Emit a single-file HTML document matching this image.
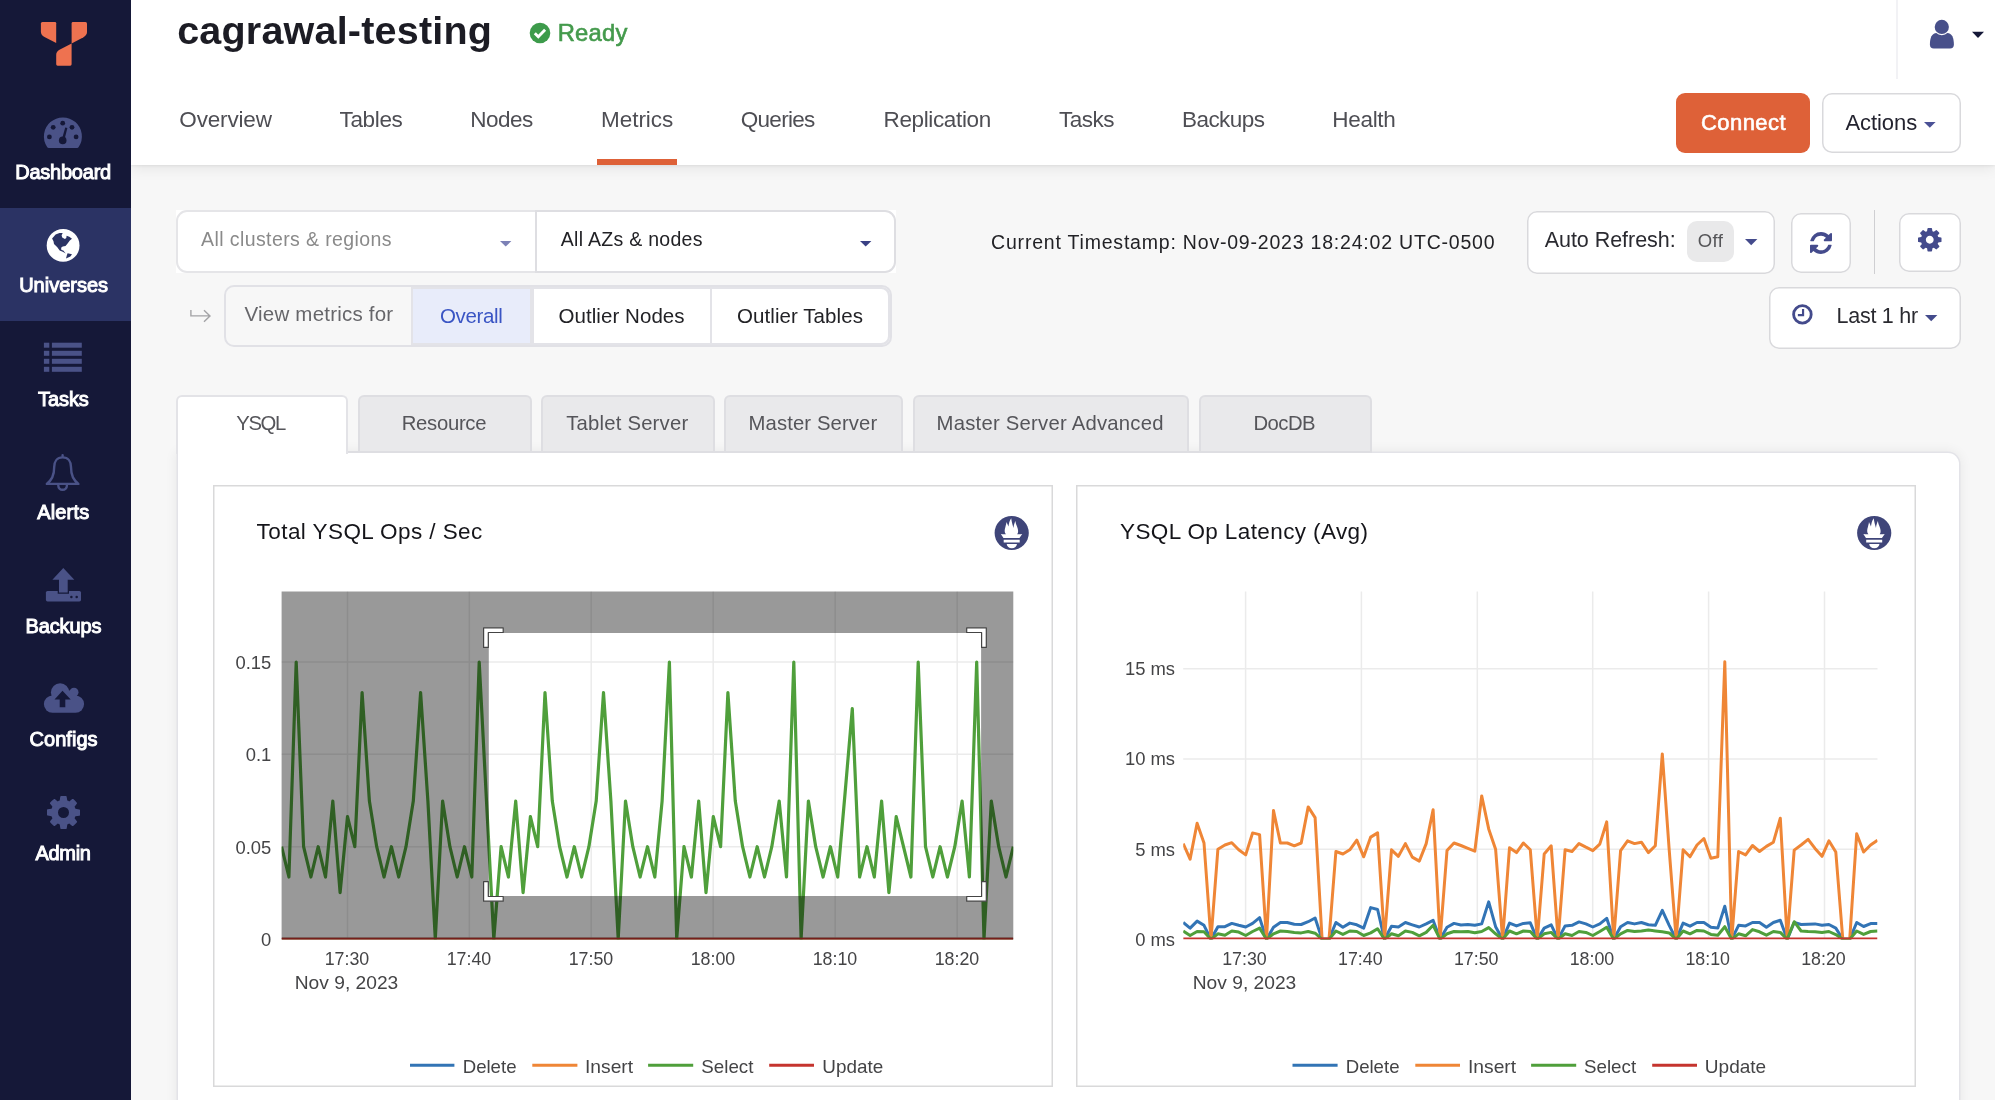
<!DOCTYPE html>
<html lang="en"><head><meta charset="utf-8"><title>cagrawal-testing - Metrics</title>
<style>
*{box-sizing:border-box;margin:0;padding:0}
html,body{width:1995px;height:1100px;overflow:hidden;background:#f7f7f7;font-family:"Liberation Sans",sans-serif}
.abs,.t,#sidebar,#header,#content div,#content svg{position:absolute}
.t{line-height:1;margin-top:-0.8465em;white-space:nowrap}
svg{display:block;overflow:visible}
#sidebar{left:0;top:0;width:131px;height:1100px;background:#151838}
#sidebar .active{position:absolute;left:0;top:208px;width:131px;height:113px;background:#2b3364}
#sidebar svg{position:absolute}
#header{left:131px;top:0;width:1864px;height:165px;background:#fff;box-shadow:0 1px 3px rgba(0,0,0,.07),0 3px 14px rgba(0,0,0,.08)}
#header div,#header svg{position:absolute}
#content{position:absolute;left:0;top:0;width:1995px;height:1100px;overflow:hidden}
.btn{background:#fff;box-shadow:inset 0 0 0 1.5px #d9d9dc;border-radius:10px}
.tab{background:#e9e9eb;border:2px solid #dedee2;border-bottom:none;border-radius:6px 6px 0 0}
.card{background:#fff;box-shadow:inset 0 0 0 1.5px #d9d9da}
#labels{position:absolute;left:0;top:0;width:1995px;height:1100px;will-change:transform}

</style></head><body>
<div id="content">
<div style="left:175.8px;top:210px;width:720.4px;height:62.7px;background:#fff"></div>
<div style="left:175.8px;top:210px;width:360px;height:62.7px;border:2px solid #e5e5e8;border-right-width:1px;border-radius:11px 0 0 11px"></div>
<div style="left:534.8px;top:210px;width:361.4px;height:62.7px;border:2px solid #dedee2;border-radius:0 11px 11px 0"></div>
<svg style="left:500px;top:240.5px" width="12" height="6"><path d="M0 0h11.4l-5.7 5.6z" fill="#7c81b6"/></svg>
<svg style="left:860px;top:240.5px" width="12" height="6"><path d="M0 0h11.4l-5.7 5.6z" fill="#3a4185"/></svg>
<div class="btn" style="left:1526.5px;top:210.5px;width:248px;height:63px"></div>
<div style="left:1687px;top:221px;width:47px;height:41px;background:#e9e9ea;border-radius:10px"></div>
<svg style="left:1744.8px;top:239px" width="13" height="7"><path d="M0 0h12.4l-6.2 6.2z" fill="#444b8c"/></svg>
<div class="btn" style="left:1790.5px;top:212.5px;width:60px;height:60.5px"></div>
<div style="left:1873.5px;top:210px;width:1.5px;height:64px;background:#cfcfd2"></div>
<div class="btn" style="left:1898.5px;top:212.5px;width:62px;height:59.5px"></div>
<div class="btn" style="left:1768.5px;top:286.5px;width:192px;height:62.5px"></div>
<svg style="left:1924.8px;top:314.8px" width="13" height="7"><path d="M0 0h12.4l-6.2 6.2z" fill="#444b8c"/></svg>
<svg style="left:1809.5px;top:231.5px" width="22" height="22" viewBox="0 0 1536 1536"><path fill="#444b8c" d="M1511 928q0 5-1 7-64 268-268 434.500T764 1536q-146 0-282.500-55T238 1324l-129 129q-19 19-45 19t-45-19-19-45V960q0-26 19-45t45-19h448q26 0 45 19t19 45-19 45l-137 137q71 66 161 102t187 36q134 0 250-65t186-179q11-17 53-117 8-23 30-23h192q13 0 22.500 9.500t9.500 22.500zm25-800v448q0 26-19 45t-45 19h-448q-26 0-45-19t-19-45 19-45l138-138Q969 256 768 256q-134 0-250 65T332 500q-11 17-53 117-8 23-30 23H50q-13 0-22.500-9.500T18 608v-7q65-268 270-434.500T768 0q146 0 284 55.500T1297 212l130-129q19-19 45-19t45 19 19 45z"/></svg>
<svg style="left:1917.5px;top:228px" width="23.5" height="23.5" viewBox="0 0 1536 1536"><path fill="#444b8c" d="M1024 768q0-106-75-181t-181-75-181 75-75 181 75 181 181 75 181-75 75-181zm512-109v222q0 12-8 23t-20 13l-185 28q-19 54-39 91 35 50 107 138 10 12 10 25t-9 23q-27 37-99 108t-94 71q-12 0-26-9l-138-108q-44 23-91 38-16 136-29 186-7 28-36 28H657q-14 0-24.500-8.500T621 1506l-28-184q-49-16-90-37l-141 107q-10 9-25 9-14 0-25-11-126-114-165-168-7-10-7-23 0-12 8-23 15-21 51-66.500t54-70.500q-27-50-41-99L29 913q-13-2-21-12.500T0 877V655q0-12 8-23t19-13l186-28q14-46 39-92-40-57-107-138-10-12-10-24 0-10 9-23 26-36 98.500-107.500T337 135q13 0 26 10l138 107q44-23 91-38 16-136 29-186 7-28 36-28h222q14 0 24.500 8.500T915 30l28 184q49 16 90 37l142-107q9-9 24-9 13 0 25 10 129 119 165 170 7 8 7 22 0 12-8 23-15 21-51 66.500t-54 70.500q26 50 41 98l183 28q13 2 21 12.500t8 23.500z"/></svg>
<svg style="left:1792.3px;top:304.2px" width="20.8" height="20.8" viewBox="0 0 22 22"><circle cx="11" cy="11" r="9.3" fill="none" stroke="#444b8c" stroke-width="3"/><path d="M11.7 5.2v6.6H6.2" fill="none" stroke="#444b8c" stroke-width="2.3"/></svg>
<svg style="left:0;top:0" width="230" height="330" viewBox="0 0 230 330"><path d="M190.9 310V315.900H209.700M204 310.200L210 315.900L204 321.800" fill="none" stroke="#a3a3a6" stroke-width="1.400"/></svg>
<div style="left:224px;top:285px;width:667.5px;height:62px;border:2px solid #e1e1e6;border-radius:10px;background:#f7f7f7"></div>
<div style="left:411px;top:287px;width:478.500px;height:58px;background:#e3e3e8;border-radius:0 8px 8px 0"></div>
<div style="left:412.600px;top:288.900px;width:117.500px;height:53.900px;background:#e8ecfa"></div>
<div style="left:533.700px;top:288.900px;width:176.200px;height:53.900px;background:#fff"></div>
<div style="left:711.800px;top:288.900px;width:176.200px;height:53.900px;background:#fff;border-radius:0 7px 7px 0"></div>
<div style="left:178px;top:453px;width:1781px;height:700px;background:#fff;border-radius:0 11px 0 0;box-shadow:0 0 0 1.5px #e3e3e8,0 0 13px 1px rgba(0,0,0,.075)"></div>
<div class="tab" style="left:358.0px;top:395px;width:174.0px;height:56px"></div>
<div class="tab" style="left:541.0px;top:395px;width:174.0px;height:56px"></div>
<div class="tab" style="left:724.0px;top:395px;width:179.0px;height:56px"></div>
<div class="tab" style="left:912.5px;top:395px;width:276.0px;height:56px"></div>
<div class="tab" style="left:1198.5px;top:395px;width:173.0px;height:56px"></div>
<div style="left:340px;top:451px;width:1032px;height:2px;background:#dedee2"></div>
<div class="tab" style="left:176px;top:395px;width:172px;height:58.5px;background:#fff;border-color:#e3e3e7"></div>
<div class="card" style="left:213px;top:484.6px;width:839.6px;height:602.9px"></div>
<div class="card" style="left:1076px;top:484.6px;width:839.6px;height:602.9px"></div>
<svg style="left:0;top:0;will-change:transform" width="1995" height="1100" viewBox="0 0 1995 1100" font-family="Liberation Sans, sans-serif" font-size="18.4" fill="#444446">
<defs><clipPath id="cp1"><rect x="281.6" y="591.5" width="731.7" height="348"/></clipPath><clipPath id="cp2"><rect x="1183.2" y="591.5" width="694.3" height="348"/></clipPath></defs>
<path d="M347.5 591.5V939.0" stroke="#ebebeb" stroke-width="1.500"/>
<path d="M469.3 591.5V939.0" stroke="#ebebeb" stroke-width="1.500"/>
<path d="M591.2 591.5V939.0" stroke="#ebebeb" stroke-width="1.500"/>
<path d="M713.2 591.5V939.0" stroke="#ebebeb" stroke-width="1.500"/>
<path d="M835.2 591.5V939.0" stroke="#ebebeb" stroke-width="1.500"/>
<path d="M957.2 591.5V939.0" stroke="#ebebeb" stroke-width="1.500"/>
<path d="M281.6 662.0H1013.3" stroke="#ebebeb" stroke-width="1.500"/>
<path d="M281.6 754.3H1013.3" stroke="#ebebeb" stroke-width="1.500"/>
<path d="M281.6 846.7H1013.3" stroke="#ebebeb" stroke-width="1.500"/>
<g clip-path="url(#cp1)">
<path d="M281.6 939.0L1013.3 939.0" fill="none" stroke="#3274b5" stroke-width="2.6" stroke-linejoin="round"/>
<path d="M281.6 939.0L1013.3 939.0" fill="none" stroke="#ef8636" stroke-width="2.6" stroke-linejoin="round"/>
<path d="M281.6 846.7L288.9 877.0L296.2 662.0L303.6 846.7L310.9 877.0L318.2 846.7L325.5 877.0L332.8 801.1L340.1 892.6L347.5 816.6L354.8 846.7L362.1 692.6L369.4 801.1L376.7 846.7L384.0 877.0L391.4 846.7L398.7 877.0L406.0 846.7L413.3 801.1L420.6 692.6L427.9 801.1L435.3 939.0L442.6 801.1L449.9 846.7L457.2 877.0L464.5 846.7L471.8 877.0L479.2 662.0L486.5 801.1L493.8 939.0L501.1 846.7L508.4 877.0L515.7 801.1L523.1 892.6L530.4 816.6L537.7 846.7L545.0 692.6L552.3 801.1L559.6 846.7L567.0 877.0L574.3 846.7L581.6 877.0L588.9 846.7L596.2 801.1L603.5 692.6L610.9 801.1L618.2 939.0L625.5 801.1L632.8 846.7L640.1 877.0L647.5 846.7L654.8 877.0L662.1 801.1L669.4 662.0L676.7 939.0L684.0 846.7L691.4 877.0L698.7 801.1L706.0 892.6L713.3 816.6L720.6 846.7L727.9 692.6L735.3 801.1L742.6 846.7L749.9 877.0L757.2 846.7L764.5 877.0L771.8 846.7L779.2 801.1L786.5 877.0L793.8 662.0L801.1 939.0L808.4 801.1L815.7 846.7L823.1 877.0L830.4 846.7L837.7 877.0L845.0 794.0L852.3 708.7L859.6 877.0L867.0 846.7L874.3 877.0L881.6 801.1L888.9 892.6L896.2 816.6L903.5 846.7L910.9 877.0L918.2 662.0L925.5 846.7L932.8 877.0L940.1 846.7L947.4 877.0L954.8 846.7L962.1 801.1L969.4 877.0L976.7 662.0L984.0 939.0L991.3 801.1L998.7 846.7L1006.0 877.0L1013.3 846.7" fill="none" stroke="#4f9f3b" stroke-width="3.2" stroke-linejoin="round"/>
<path d="M281.6 938.6L1013.3 938.6" fill="none" stroke="#c5342e" stroke-width="1.8" stroke-linejoin="round"/>
</g>
<path fill-rule="evenodd" fill="rgba(0,0,0,0.4)" d="M281.6 591.5H1013.3V939.5H281.6zM488.8 633.0H981.1V896.0H488.8z"/>
<path d="M483.6 627.8H503.2V632.5H488.3V647.4H483.6z" fill="#fff" stroke="#444" stroke-width="1.200" stroke-linejoin="round"/>
<path d="M986.3 627.8H966.7V632.5H981.6V647.4H986.3z" fill="#fff" stroke="#444" stroke-width="1.200" stroke-linejoin="round"/>
<path d="M483.6 901.2H503.2V896.5H488.3V881.6H483.6z" fill="#fff" stroke="#444" stroke-width="1.200" stroke-linejoin="round"/>
<path d="M986.3 901.2H966.7V896.5H981.6V881.6H986.3z" fill="#fff" stroke="#444" stroke-width="1.200" stroke-linejoin="round"/>
<text x="271.300" y="668.9" text-anchor="end">0.15</text>
<text x="271.300" y="761.2" text-anchor="end">0.1</text>
<text x="271.300" y="853.6" text-anchor="end">0.05</text>
<text x="271.300" y="946.4" text-anchor="end">0</text>
<text x="347.0" y="965.300" text-anchor="middle" textLength="44.600" lengthAdjust="spacingAndGlyphs">17:30</text>
<text x="469.0" y="965.300" text-anchor="middle" textLength="44.600" lengthAdjust="spacingAndGlyphs">17:40</text>
<text x="591.0" y="965.300" text-anchor="middle" textLength="44.600" lengthAdjust="spacingAndGlyphs">17:50</text>
<text x="713.0" y="965.300" text-anchor="middle" textLength="44.600" lengthAdjust="spacingAndGlyphs">18:00</text>
<text x="835.0" y="965.300" text-anchor="middle" textLength="44.600" lengthAdjust="spacingAndGlyphs">18:10</text>
<text x="957.0" y="965.300" text-anchor="middle" textLength="44.600" lengthAdjust="spacingAndGlyphs">18:20</text>
<text x="346.500" y="988.500" text-anchor="middle" textLength="103.500" lengthAdjust="spacingAndGlyphs">Nov 9, 2023</text>
<path d="M410.0 1065.2H454.4" stroke="#3274b5" stroke-width="3"/><text x="462.7" y="1072.6" textLength="53.8" lengthAdjust="spacingAndGlyphs">Delete</text><path d="M532.3 1065.2H577.4" stroke="#ef8636" stroke-width="3"/><text x="585.0" y="1072.6" textLength="48.1" lengthAdjust="spacingAndGlyphs">Insert</text><path d="M648.1 1065.2H693.2" stroke="#4f9f3b" stroke-width="3"/><text x="701.3" y="1072.6" textLength="52.1" lengthAdjust="spacingAndGlyphs">Select</text><path d="M769.2 1065.2H814.0" stroke="#c5342e" stroke-width="3"/><text x="822.3" y="1072.6" textLength="60.9" lengthAdjust="spacingAndGlyphs">Update</text>
<path d="M1245.6 591.5V939.0" stroke="#ebebeb" stroke-width="1.500"/>
<path d="M1361.4 591.5V939.0" stroke="#ebebeb" stroke-width="1.500"/>
<path d="M1477.3 591.5V939.0" stroke="#ebebeb" stroke-width="1.500"/>
<path d="M1592.7 591.5V939.0" stroke="#ebebeb" stroke-width="1.500"/>
<path d="M1708.6 591.5V939.0" stroke="#ebebeb" stroke-width="1.500"/>
<path d="M1824.5 591.5V939.0" stroke="#ebebeb" stroke-width="1.500"/>
<path d="M1183.2 668.7H1877.5" stroke="#ebebeb" stroke-width="1.500"/>
<path d="M1183.2 759.0H1877.5" stroke="#ebebeb" stroke-width="1.500"/>
<path d="M1183.2 849.3H1877.5" stroke="#ebebeb" stroke-width="1.500"/>
<g clip-path="url(#cp2)">
<path d="M1183.2 922.5L1190.1 928.1L1197.1 921.1L1204.0 925.3L1211.0 939.3L1217.9 926.7L1224.9 926.7L1231.8 923.4L1238.7 925.3L1245.7 927.0L1252.6 923.4L1259.6 917.7L1266.5 939.3L1273.5 927.3L1280.4 922.5L1287.3 922.5L1294.3 924.2L1301.2 924.5L1308.2 921.7L1315.1 918.0L1322.1 939.3L1329.0 939.3L1335.9 922.5L1342.9 927.3L1349.8 923.1L1356.8 924.8L1363.7 928.1L1370.7 907.6L1377.6 909.5L1384.5 939.3L1391.5 926.2L1398.4 927.0L1405.4 922.5L1412.3 924.8L1419.3 927.0L1426.2 923.9L1433.1 920.3L1440.1 939.3L1447.0 927.3L1454.0 923.4L1460.9 925.0L1467.9 924.5L1474.8 925.3L1481.7 923.9L1488.7 901.9L1495.6 926.7L1502.6 939.3L1509.5 923.1L1516.5 925.9L1523.4 923.4L1530.3 922.8L1537.3 939.3L1544.2 928.1L1551.2 924.8L1558.1 939.3L1565.1 925.9L1572.0 925.3L1579.0 921.9L1585.9 923.9L1592.8 927.0L1599.8 923.9L1606.7 918.3L1613.7 939.3L1620.6 926.7L1627.6 922.5L1634.5 923.9L1641.4 922.5L1648.4 924.8L1655.3 925.3L1662.3 910.4L1669.2 925.3L1676.2 939.3L1683.1 923.1L1690.0 926.2L1697.0 922.5L1703.9 922.5L1710.9 927.3L1717.8 928.1L1724.8 906.2L1731.7 939.3L1738.6 925.3L1745.6 925.9L1752.5 922.5L1759.5 922.5L1766.4 927.3L1773.4 922.5L1780.3 920.3L1787.2 939.3L1794.2 922.5L1801.1 924.5L1808.1 924.2L1815.0 923.9L1822.0 925.3L1828.9 924.5L1835.8 928.1L1842.8 939.3L1849.7 939.3L1856.7 922.5L1863.6 926.5L1870.6 923.6L1877.5 923.6" fill="none" stroke="#3274b5" stroke-width="3" stroke-linejoin="round"/>
<path d="M1183.2 843.6L1190.1 859.1L1197.1 823.3L1204.0 843.0L1211.0 939.3L1217.9 849.2L1224.9 845.0L1231.8 842.7L1238.7 849.8L1245.7 854.9L1252.6 832.9L1259.6 834.6L1266.5 939.3L1273.5 810.6L1280.4 843.0L1287.3 843.0L1294.3 845.8L1301.2 843.0L1308.2 806.9L1315.1 817.6L1322.1 939.3L1329.0 939.3L1335.9 851.5L1342.9 854.0L1349.8 849.8L1356.8 840.2L1363.7 856.8L1370.7 837.1L1377.6 832.9L1384.5 939.3L1391.5 849.8L1398.4 856.3L1405.4 843.6L1412.3 857.1L1419.3 861.1L1426.2 843.6L1433.1 809.7L1440.1 939.3L1447.0 850.6L1454.0 843.0L1460.9 845.5L1467.9 848.4L1474.8 851.2L1481.7 795.9L1488.7 828.9L1495.6 849.2L1502.6 939.3L1509.5 847.8L1516.5 852.6L1523.4 843.0L1530.3 849.8L1537.3 939.3L1544.2 854.0L1551.2 845.8L1558.1 939.3L1565.1 849.8L1572.0 851.5L1579.0 843.6L1585.9 847.2L1592.8 850.6L1599.8 844.1L1606.7 821.9L1613.7 939.3L1620.6 850.6L1627.6 840.8L1634.5 843.6L1641.4 842.2L1648.4 852.6L1655.3 845.8L1662.3 753.9L1669.2 849.8L1676.2 939.3L1683.1 849.8L1690.0 856.8L1697.0 845.0L1703.9 838.5L1710.9 858.2L1717.8 856.8L1724.8 661.7L1731.7 939.3L1738.6 851.5L1745.6 854.9L1752.5 845.5L1759.5 851.5L1766.4 846.4L1773.4 842.2L1780.3 818.2L1787.2 939.3L1794.2 850.1L1801.1 845.0L1808.1 839.3L1815.0 848.4L1822.0 856.3L1828.9 840.8L1835.8 852.0L1842.8 939.3L1849.7 939.3L1856.7 833.7L1863.6 852.0L1870.6 845.0L1877.5 840.2" fill="none" stroke="#ef8636" stroke-width="3" stroke-linejoin="round"/>
<path d="M1183.2 931.0L1190.1 935.5L1197.1 931.5L1204.0 931.8L1211.0 939.3L1217.9 933.8L1224.9 935.2L1231.8 931.0L1238.7 932.1L1245.7 935.5L1252.6 931.5L1259.6 928.1L1266.5 939.3L1273.5 933.8L1280.4 931.0L1287.3 931.5L1294.3 932.4L1301.2 932.9L1308.2 931.5L1315.1 933.2L1322.1 939.3L1329.0 939.3L1335.9 931.0L1342.9 934.4L1349.8 931.0L1356.8 931.5L1363.7 935.5L1370.7 932.9L1377.6 928.7L1384.5 939.3L1391.5 933.8L1398.4 935.8L1405.4 931.0L1412.3 932.4L1419.3 935.8L1426.2 932.4L1433.1 925.3L1440.1 939.3L1447.0 933.8L1454.0 931.5L1460.9 931.8L1467.9 931.5L1474.8 932.7L1481.7 931.5L1488.7 927.6L1495.6 933.8L1502.6 939.3L1509.5 931.0L1516.5 933.8L1523.4 931.0L1530.3 931.5L1537.3 939.3L1544.2 933.8L1551.2 932.4L1558.1 939.3L1565.1 933.8L1572.0 935.5L1579.0 931.5L1585.9 932.4L1592.8 935.5L1599.8 931.5L1606.7 927.3L1613.7 939.3L1620.6 933.8L1627.6 930.4L1634.5 931.5L1641.4 931.0L1648.4 930.1L1655.3 931.0L1662.3 931.8L1669.2 932.9L1676.2 939.3L1683.1 931.0L1690.0 933.8L1697.0 930.4L1703.9 931.0L1710.9 934.4L1717.8 935.2L1724.8 926.7L1731.7 939.3L1738.6 933.8L1745.6 935.8L1752.5 929.6L1759.5 931.8L1766.4 935.2L1773.4 931.5L1780.3 932.4L1787.2 939.3L1794.2 921.7L1801.1 931.0L1808.1 931.5L1815.0 931.8L1822.0 932.4L1828.9 931.5L1835.8 934.6L1842.8 939.3L1849.7 939.3L1856.7 931.0L1863.6 934.4L1870.6 931.5L1877.5 931.0" fill="none" stroke="#4f9f3b" stroke-width="3" stroke-linejoin="round"/>
<path d="M1183.2 938.5L1877.5 938.5" fill="none" stroke="#c5342e" stroke-width="2.1" stroke-linejoin="round"/>
</g>
<text x="1175" y="674.9" text-anchor="end">15 ms</text>
<text x="1175" y="765.2" text-anchor="end">10 ms</text>
<text x="1175" y="855.5" text-anchor="end">5 ms</text>
<text x="1175" y="945.7" text-anchor="end">0 ms</text>
<text x="1244.5" y="965.300" text-anchor="middle" textLength="44.600" lengthAdjust="spacingAndGlyphs">17:30</text>
<text x="1360.3" y="965.300" text-anchor="middle" textLength="44.600" lengthAdjust="spacingAndGlyphs">17:40</text>
<text x="1476.2" y="965.300" text-anchor="middle" textLength="44.600" lengthAdjust="spacingAndGlyphs">17:50</text>
<text x="1592.0" y="965.300" text-anchor="middle" textLength="44.600" lengthAdjust="spacingAndGlyphs">18:00</text>
<text x="1707.7" y="965.300" text-anchor="middle" textLength="44.600" lengthAdjust="spacingAndGlyphs">18:10</text>
<text x="1823.5" y="965.300" text-anchor="middle" textLength="44.600" lengthAdjust="spacingAndGlyphs">18:20</text>
<text x="1244.500" y="988.500" text-anchor="middle" textLength="103.500" lengthAdjust="spacingAndGlyphs">Nov 9, 2023</text>
<path d="M1292.5 1065.2H1337.6" stroke="#3274b5" stroke-width="3"/><text x="1345.7" y="1072.6" textLength="53.8" lengthAdjust="spacingAndGlyphs">Delete</text><path d="M1415.3 1065.2H1460.0" stroke="#ef8636" stroke-width="3"/><text x="1468.0" y="1072.6" textLength="48.1" lengthAdjust="spacingAndGlyphs">Insert</text><path d="M1531.1 1065.2H1576.2" stroke="#4f9f3b" stroke-width="3"/><text x="1584.0" y="1072.6" textLength="52.1" lengthAdjust="spacingAndGlyphs">Select</text><path d="M1652.2 1065.2H1697.0" stroke="#c5342e" stroke-width="3"/><text x="1704.8" y="1072.6" textLength="61.4" lengthAdjust="spacingAndGlyphs">Update</text>
<g transform="translate(1011.7 533)"><circle r="17.100" fill="#3f4579"/><path fill="#fff" d="M-.5-14.750C0-11 1-8 1.750-5 2-8 3-10.500 3.750-12 4-9 5-7.500 5.500-6 6.500-3.500 7-.5 5.500 1.200 7 1.500 9 1.200 10.500 1L7.750 5H-8.250L-10.850 1C-9 1.200-7.500 1.500-5.800 1.200-7.500-.5-7.200-3.500-6.300-6-5.800-8-5.300-9.500-5.250-11-4.500-9.500-3.800-8-3.250-6.500-2.800-9-2.300-12.500-.5-14.750zM-8 6.750H8V9.500H-8zM-5 11H5.250A5.100 4.200 0 0 1-5 11z"/></g>
<g transform="translate(1874.2 533)"><circle r="17.100" fill="#3f4579"/><path fill="#fff" d="M-.5-14.750C0-11 1-8 1.750-5 2-8 3-10.500 3.750-12 4-9 5-7.500 5.500-6 6.500-3.500 7-.5 5.500 1.200 7 1.500 9 1.200 10.500 1L7.750 5H-8.250L-10.850 1C-9 1.200-7.500 1.500-5.800 1.200-7.500-.5-7.200-3.500-6.300-6-5.800-8-5.300-9.500-5.250-11-4.500-9.500-3.800-8-3.250-6.500-2.800-9-2.300-12.500-.5-14.750zM-8 6.750H8V9.500H-8zM-5 11H5.250A5.100 4.200 0 0 1-5 11z"/></g>
</svg>
</div>
<div id="header">
<div style="left:466px;top:159px;width:79.6px;height:6px;background:#de6138"></div>
<div style="left:1545px;top:93px;width:134px;height:59.7px;background:#de6138;border-radius:9px"></div>
<div class="btn" style="left:1690.5px;top:93.3px;width:139.3px;height:59.3px;border-radius:10px"></div>
<svg style="left:1793.2px;top:122px" width="12" height="6"><path d="M0 0h11.6l-5.8 5.8z" fill="#4a5196"/></svg>
<div style="left:1765.2px;top:0;width:1.6px;height:79px;background:#f2f2f5"></div>
<svg style="left:1769px;top:0" width="95" height="80" viewBox="1900 0 95 80"><path fill="#48508a" d="M1936.500 32.900H1947.300C1952 32.900 1953.900 38 1953.900 44.500Q1953.900 48.600 1950 48.600H1933.800Q1929.900 48.600 1929.900 44.500C1929.900 38 1931.800 32.900 1936.500 32.900z"/><circle cx="1941.800" cy="26.900" r="8.300" fill="#fff"/><circle cx="1941.800" cy="26.900" r="7.100" fill="#48508a"/><path d="M1972 31.800h12l-6 6.200z" fill="#151838"/></svg>
<svg style="left:398px;top:22px" width="22" height="22" viewBox="0 0 22 22"><circle cx="11" cy="11" r="10.3" fill="#3d9b4b"/><path d="M5.8 11.300l3.500 3.500 6.800-7" fill="none" stroke="#fff" stroke-width="2.900"/></svg>
</div>
<div id="sidebar"><div class="active"></div>
<svg style="left:0;top:0" width="131" height="900" viewBox="0 0 131 900">
<g fill="#ee7250"><path d="M42.400 22H55Q56.200 22 56.200 23.200V43L44.500 37.100Q40.900 35.200 40.900 31.500V23.500Q40.900 22 42.400 22z"/><path d="M73 22H85.500Q87 22 87 23.500V31.800Q87 35.300 83.500 37.200L71.600 43.400V23.400Q71.600 22 73 22z"/><path d="M71.600 43.400V64.300Q71.600 65.700 70.200 65.700H57.600Q56.200 65.700 56.200 64.300V55Q56.200 51.500 59.500 49.800z"/></g>
<path d="M48.800 148Q47.600 148 47 146.800A19 19 0 1 1 78.800 146.800Q78.200 148 77 148z" fill="#4a5287"/>
<g fill="#151838"><circle cx="49.400" cy="136.900" r="2.400"/><circle cx="53.200" cy="127.300" r="2.400"/><circle cx="62.700" cy="123.200" r="2.400"/><circle cx="72" cy="127.300" r="2.400"/><circle cx="76.100" cy="136.900" r="2.400"/><circle cx="62.700" cy="140.400" r="3.800"/><path d="M65.200 127.500l2.200.6-3 12-2.500-.6z"/></g>
<circle cx="63.100" cy="245.400" r="16.400" fill="#fff"/>
<path fill="#2b3364" d="M52.100 238.500L55.600 234.600 59.500 233 62.700 233 61.600 235.200 62.200 237.400 64.900 239 66.300 237.900 66.600 235.700 69.300 236.800 72 238.700 69.800 240.600 67.600 243.400 65.500 246.100 62.700 246.600 61.100 247.700 61.400 249.900 63.300 250.500 64.900 252.600 65.800 253.600 62.700 251.800 59.700 250.500 57.300 247.200 54 243.900 53.500 241.200zM67.600 253.200L72 254.300 70.400 256.500 66 258.400 66.800 255.400z"/>
<g fill="#4a5287"><rect x="43.900" y="342.7" width="5.400" height="5"/><rect x="51.900" y="342.7" width="29.900" height="5"/><rect x="43.900" y="350.8" width="5.400" height="5"/><rect x="51.900" y="350.8" width="29.900" height="5"/><rect x="43.900" y="358.8" width="5.400" height="5"/><rect x="51.900" y="358.8" width="29.900" height="5"/><rect x="43.900" y="366.8" width="5.400" height="5"/><rect x="51.900" y="366.8" width="29.900" height="5"/></g>
<g fill="none" stroke="#4a5287" stroke-width="2.400" stroke-linejoin="round" stroke-linecap="round"><path d="M62.600 455.300v1.500M62.600 457.400C57 457.400 54.200 461.500 54.200 467 54.200 476 51.500 480 46.800 483.900H78.400C73.700 480 71 476 71 467 71 461.500 68.200 457.400 62.600 457.400z"/><path d="M58.300 485.500a4.300 4.300 0 0 0 8.600 0"/></g>
<g fill="#4a5287"><rect x="45.900" y="590.900" width="35.100" height="10.500" rx="1.600"/><path d="M63.300 567.900L74.300 579.800H67.700V592.400H59V579.800H52.400z" stroke="#151838" stroke-width="2.600" paint-order="stroke"/></g>
<circle cx="71.400" cy="597" r="1.250" fill="#151838"/><circle cx="76.700" cy="597" r="1.250" fill="#151838"/>
<g fill="#4a5287"><circle cx="60.100" cy="692.500" r="9.200"/><circle cx="74" cy="692.300" r="4.500"/><rect x="43.900" y="695.500" width="40.200" height="17.200" rx="8.600"/><rect x="62" y="690.500" width="13" height="8"/></g>
<path fill="#151838" d="M62.500 690.800L70.700 699.600H65.300V707.200H59.700V699.600H54.500z"/>
</svg>
<svg style="left:46.500px;top:796.300px" width="33" height="33" viewBox="0 0 1536 1536"><path fill="#4a5287" d="M1024 768q0-106-75-181t-181-75-181 75-75 181 75 181 181 75 181-75 75-181zm512-109v222q0 12-8 23t-20 13l-185 28q-19 54-39 91 35 50 107 138 10 12 10 25t-9 23q-27 37-99 108t-94 71q-12 0-26-9l-138-108q-44 23-91 38-16 136-29 186-7 28-36 28H657q-14 0-24.500-8.500T621 1506l-28-184q-49-16-90-37l-141 107q-10 9-25 9-14 0-25-11-126-114-165-168-7-10-7-23 0-12 8-23 15-21 51-66.500t54-70.500q-27-50-41-99L29 913q-13-2-21-12.500T0 877V655q0-12 8-23t19-13l186-28q14-46 39-92-40-57-107-138-10-12-10-24 0-10 9-23 26-36 98.500-107.500T337 135q13 0 26 10l138 107q44-23 91-38 16-136 29-186 7-28 36-28h222q14 0 24.500 8.500T915 30l28 184q49 16 90 37l142-107q9-9 24-9 13 0 25 10 129 119 165 170 7 8 7 22 0 12-8 23-15 21-51 66.500t-54 70.500q26 50 41 98l183 28q13 2 21 12.500t8 23.500z"/></svg>
</div>
<div id="labels">
<span class="t" id="t0" style="left:177.2px;top:44.9px;font-size:39.5px;color:#1c1c24;font-weight:700;letter-spacing:0.200px">cagrawal-testing</span>
<span class="t" id="t1" style="left:557.7px;top:40.7px;font-size:23.8px;color:#449a4c;font-weight:400;-webkit-text-stroke:0.60px #449a4c;letter-spacing:0.226px">Ready</span>
<span class="t" id="t2" style="left:179.3px;top:127.7px;font-size:22.5px;color:#4e4e54;font-weight:400;letter-spacing:-0.169px">Overview</span>
<span class="t" id="t3" style="left:339.6px;top:127.7px;font-size:22.5px;color:#4e4e54;font-weight:400;letter-spacing:-0.369px">Tables</span>
<span class="t" id="t4" style="left:470.2px;top:127.7px;font-size:22.5px;color:#4e4e54;font-weight:400;letter-spacing:-0.487px">Nodes</span>
<span class="t" id="t5" style="left:601.0px;top:127.7px;font-size:22.5px;color:#4e4e54;font-weight:400;letter-spacing:-0.033px">Metrics</span>
<span class="t" id="t6" style="left:740.7px;top:127.7px;font-size:22.5px;color:#4e4e54;font-weight:400;letter-spacing:-0.683px">Queries</span>
<span class="t" id="t7" style="left:883.5px;top:127.7px;font-size:22.5px;color:#4e4e54;font-weight:400;letter-spacing:-0.363px">Replication</span>
<span class="t" id="t8" style="left:1058.9px;top:127.7px;font-size:22.5px;color:#4e4e54;font-weight:400;letter-spacing:-0.504px">Tasks</span>
<span class="t" id="t9" style="left:1182.1px;top:127.7px;font-size:22.5px;color:#4e4e54;font-weight:400;letter-spacing:-0.585px">Backups</span>
<span class="t" id="t10" style="left:1332.3px;top:127.7px;font-size:22.5px;color:#4e4e54;font-weight:400;letter-spacing:-0.309px">Health</span>
<span class="t" id="t11" style="left:1701.0px;top:130.9px;font-size:22px;color:#ffffff;font-weight:400;-webkit-text-stroke:0.60px #ffffff;letter-spacing:0.441px">Connect</span>
<span class="t" id="t12" style="left:1845.5px;top:130.9px;font-size:22px;color:#23232f;font-weight:400;letter-spacing:-0.076px">Actions</span>
<span class="t" id="t13" style="left:15.2px;top:179.2px;font-size:20px;color:#ffffff;font-weight:400;-webkit-text-stroke:0.98px #ffffff;letter-spacing:-0.230px">Dashboard</span>
<span class="t" id="t14" style="left:19.2px;top:292.1px;font-size:20px;color:#ffffff;font-weight:400;-webkit-text-stroke:0.98px #ffffff;letter-spacing:-0.015px">Universes</span>
<span class="t" id="t15" style="left:38.0px;top:405.6px;font-size:20px;color:#ffffff;font-weight:400;-webkit-text-stroke:0.98px #ffffff;letter-spacing:-0.081px">Tasks</span>
<span class="t" id="t16" style="left:37.2px;top:518.7px;font-size:20px;color:#ffffff;font-weight:400;-webkit-text-stroke:0.98px #ffffff;letter-spacing:0.175px">Alerts</span>
<span class="t" id="t17" style="left:25.5px;top:632.9px;font-size:20px;color:#ffffff;font-weight:400;-webkit-text-stroke:0.98px #ffffff;letter-spacing:-0.120px">Backups</span>
<span class="t" id="t18" style="left:29.5px;top:746.1px;font-size:20px;color:#ffffff;font-weight:400;-webkit-text-stroke:0.98px #ffffff;letter-spacing:0.048px">Configs</span>
<span class="t" id="t19" style="left:35.4px;top:859.9px;font-size:20px;color:#ffffff;font-weight:400;-webkit-text-stroke:0.98px #ffffff;letter-spacing:-0.276px">Admin</span>
<span class="t" id="t20" style="left:201.1px;top:246.7px;font-size:19.5px;color:#8a8a8a;font-weight:400;letter-spacing:0.401px">All clusters &amp; regions</span>
<span class="t" id="t21" style="left:560.8px;top:246.7px;font-size:19.5px;color:#222226;font-weight:400;letter-spacing:0.289px">All AZs &amp; nodes</span>
<span class="t" id="t22" style="left:991.1px;top:249.0px;font-size:19.5px;color:#222226;font-weight:400;letter-spacing:0.797px">Current Timestamp: Nov-09-2023 18:24:02 UTC-0500</span>
<span class="t" id="t23" style="left:1544.7px;top:248.1px;font-size:21.5px;color:#2a2a30;font-weight:400;letter-spacing:-0.039px">Auto Refresh:</span>
<span class="t" id="t24" style="left:1697.8px;top:248.1px;font-size:18.5px;color:#555558;font-weight:400;letter-spacing:0.328px">Off</span>
<span class="t" id="t25" style="left:1836.5px;top:323.8px;font-size:21.5px;color:#2a2a30;font-weight:400;letter-spacing:-0.259px">Last 1 hr</span>
<span class="t" id="t26" style="left:244.6px;top:321.7px;font-size:20.5px;color:#66666a;font-weight:400;letter-spacing:0.204px">View metrics for</span>
<span class="t" id="t27" style="left:440.0px;top:323.6px;font-size:20.5px;color:#3a55c4;font-weight:400;letter-spacing:-0.340px">Overall</span>
<span class="t" id="t28" style="left:558.5px;top:323.6px;font-size:20.5px;color:#222226;font-weight:400;letter-spacing:0.063px">Outlier Nodes</span>
<span class="t" id="t29" style="left:737.1px;top:323.6px;font-size:20.5px;color:#222226;font-weight:400;letter-spacing:0.064px">Outlier Tables</span>
<span class="t" id="t30" style="left:236.3px;top:430.2px;font-size:20.3px;color:#55555a;font-weight:400;letter-spacing:-1.375px">YSQL</span>
<span class="t" id="t31" style="left:401.7px;top:430.2px;font-size:20.3px;color:#55555a;font-weight:400;letter-spacing:-0.287px">Resource</span>
<span class="t" id="t32" style="left:566.2px;top:430.2px;font-size:20.3px;color:#55555a;font-weight:400;letter-spacing:0.208px">Tablet Server</span>
<span class="t" id="t33" style="left:748.5px;top:430.2px;font-size:20.3px;color:#55555a;font-weight:400;letter-spacing:0.112px">Master Server</span>
<span class="t" id="t34" style="left:936.5px;top:430.2px;font-size:20.3px;color:#55555a;font-weight:400;letter-spacing:0.234px">Master Server Advanced</span>
<span class="t" id="t35" style="left:1253.5px;top:430.2px;font-size:20.3px;color:#55555a;font-weight:400;letter-spacing:-0.562px">DocDB</span>
<span class="t" id="t36" style="left:256.6px;top:540.3px;font-size:22.5px;color:#15151a;font-weight:400;letter-spacing:0.426px">Total YSQL Ops / Sec</span>
<span class="t" id="t37" style="left:1120.0px;top:540.3px;font-size:22.5px;color:#15151a;font-weight:400;letter-spacing:0.394px">YSQL Op Latency (Avg)</span>
</div>
</body></html>
